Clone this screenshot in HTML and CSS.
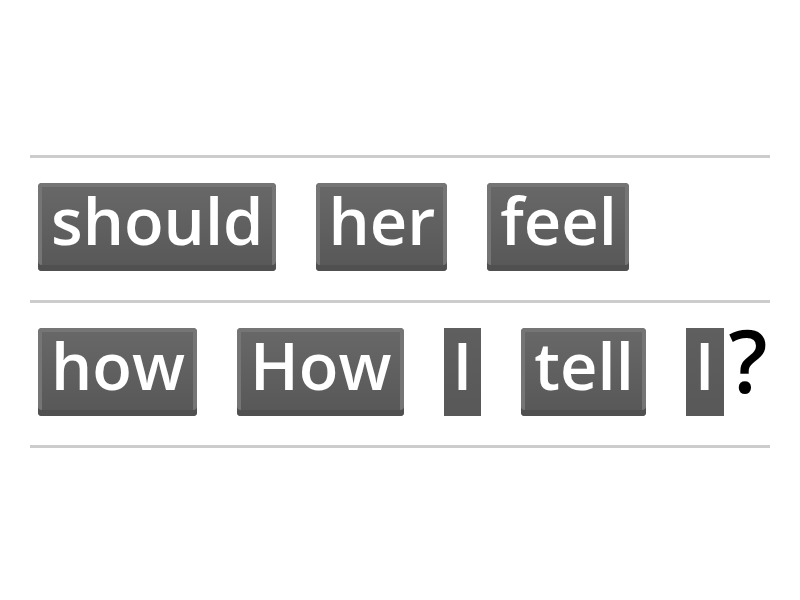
FILE: index.html
```html
<!DOCTYPE html>
<html>
<head>
<meta charset="utf-8">
<link rel="stylesheet" href="styles.css">
</head>
<body>
<div class="board">
  <div class="row">
    <span class="tile">should</span>
    <span class="tile">her</span>
    <span class="tile">feel</span>
  </div>
  <div class="row">
    <span class="tile">how</span>
    <span class="tile">How</span>
    <span class="tile flat">I</span>
    <span class="tile">tell</span>
    <span class="group"><span class="tile flat">I</span><span class="mark">?</span></span>
  </div>
  <div class="rule"></div>
</div>
</body>
</html>
```

FILE: styles.css
```css
html, body {
  margin: 0;
  padding: 0;
  background: #ffffff;
}

body {
  font-family: "Open Sans", "Liberation Sans", sans-serif;
}

.board {
  width: 740px;
  margin: 155px 0 0 30px;
}

.row {
  border-top: 3px solid #cccccc;
  padding: 25px 0 29px 8px;
  display: flex;
  align-items: flex-start;
  gap: 40px;
}

.rule {
  border-top: 3px solid #cccccc;
}

.tile {
  display: block;
  box-sizing: border-box;
  height: 88px;
  line-height: 74px;
  padding: 0 12px 0 13px;
  font-size: 65px;
  font-weight: 600;
  color: #ffffff;
  border-radius: 4px;
  background: linear-gradient(#686868, #5f5f5f 55%, #575757);
  box-shadow:
    inset 0 -6px 0 #505050,
    inset 0 0 0 4px #757575;
}

.tile.flat {
  padding: 0 9px;
  border-radius: 0;
  background: linear-gradient(#5f5f5f, #585858);
  box-shadow: none;
}

.group {
  display: flex;
  align-items: flex-start;
  gap: 5px;
}

.mark {
  font-size: 86px;
  font-weight: 600;
  color: #000000;
  line-height: 63px;
}
```
